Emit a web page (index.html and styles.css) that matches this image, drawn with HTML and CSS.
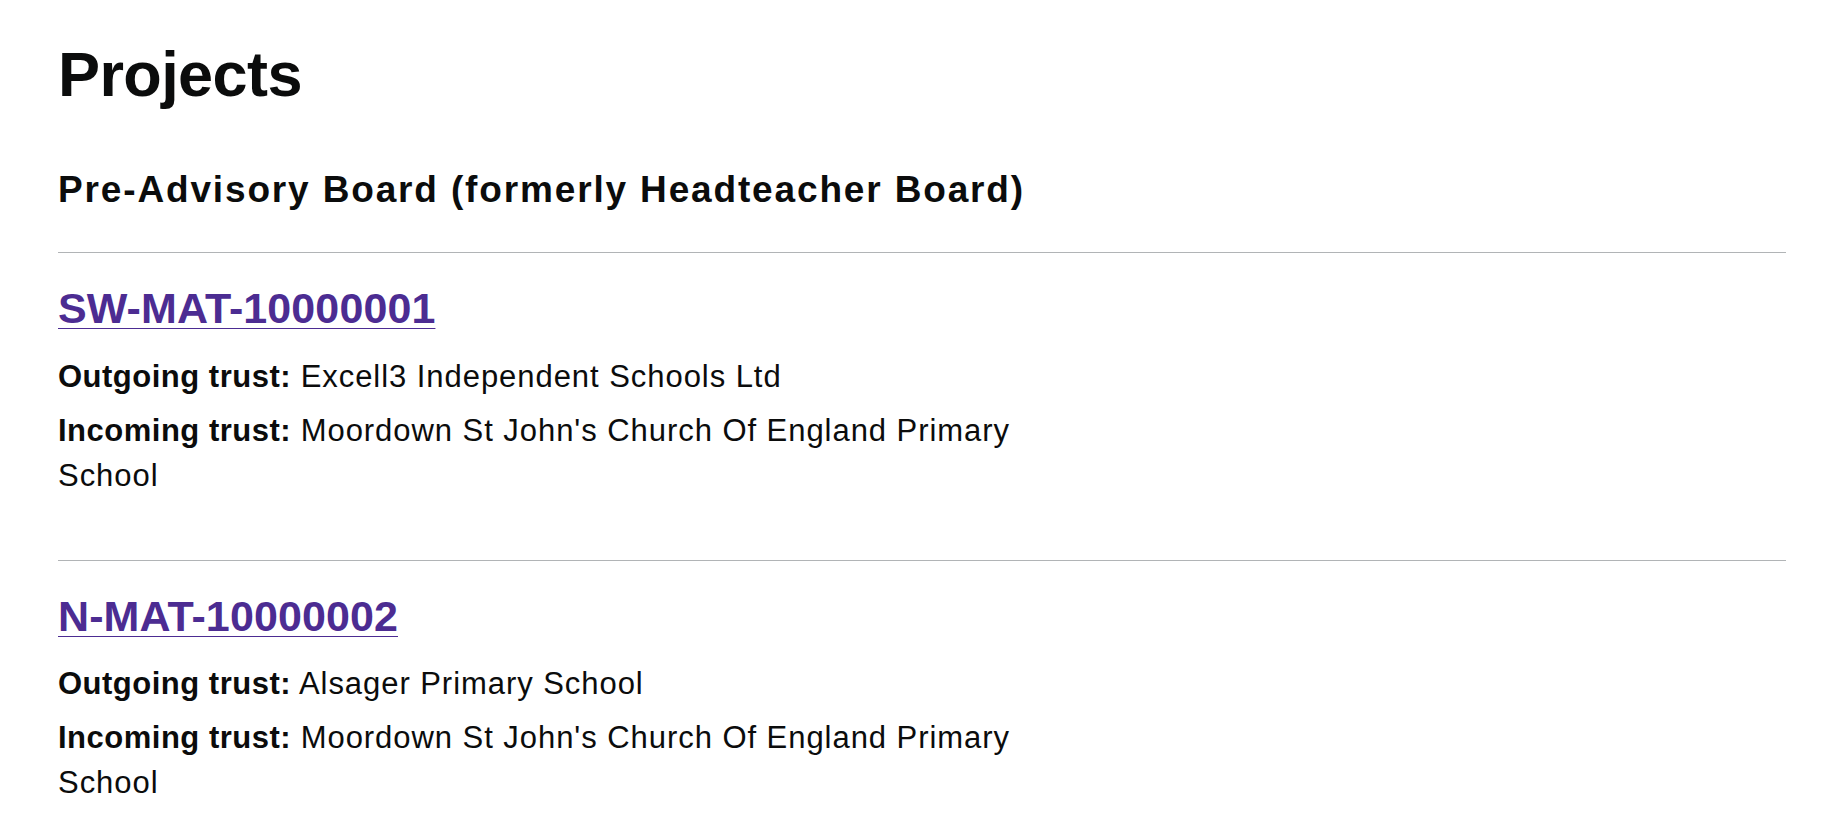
FILE: index.html
```html
<!DOCTYPE html>
<html lang="en">
<head>
<meta charset="utf-8">
<title>Projects</title>
<link rel="stylesheet" href="styles.css">
</head>
<body>
<main class="page">
  <h1 class="title">Projects</h1>
  <h2 class="section-title">Pre-Advisory Board (formerly Headteacher Board)</h2>
  <ul class="project-list">
    <li class="project">
      <h3 class="project-heading"><a class="project-link" href="#">SW-MAT-10000001</a></h3>
      <p class="detail"><strong class="label">Outgoing trust:</strong> Excell3 Independent Schools Ltd</p>
      <p class="detail"><strong class="label">Incoming trust:</strong> Moordown St John's Church Of England Primary School</p>
    </li>
    <li class="project">
      <h3 class="project-heading"><a class="project-link" href="#">N-MAT-10000002</a></h3>
      <p class="detail"><strong class="label">Outgoing trust:</strong> Alsager Primary School</p>
      <p class="detail"><strong class="label">Incoming trust:</strong> Moordown St John's Church Of England Primary School</p>
    </li>
  </ul>
</main>
</body>
</html>
```

FILE: styles.css
```css
html, body {
  margin: 0;
  padding: 0;
  background: #ffffff;
}

body {
  font-family: "Liberation Sans", Arial, sans-serif;
  color: #0b0c0c;
}

.page {
  width: 1728px;
  margin: 0 0 0 58px;
  padding-top: 39px;
}

.title {
  margin: 0;
  font-size: 63px;
  line-height: 70px;
  font-weight: 700;
  letter-spacing: -0.6px;
}

.section-title {
  margin: 59px 0 40px;
  font-size: 37px;
  line-height: 44px;
  font-weight: 700;
  letter-spacing: 1.85px;
}

.project-list {
  list-style: none;
  margin: 0;
  padding: 0;
}

.project {
  border-top: 1px solid #b1b4b6;
  padding: 30px 0 62px;
}

.project-heading {
  margin: 0 0 20.5px;
  font-size: 43px;
  line-height: 50px;
  font-weight: 700;
  letter-spacing: 0.1px;
}

.project-link {
  color: #4c2c92;
  text-decoration: underline;
  text-decoration-thickness: 1px;
  text-underline-offset: 5px;
}

.detail {
  margin: 0 0 9px;
  max-width: 1000px;
  font-size: 31px;
  line-height: 45px;
  letter-spacing: 0.95px;
}

.detail:last-child {
  margin-bottom: 0;
}

.label {
  font-weight: 700;
  letter-spacing: 0.5px;
}
```
